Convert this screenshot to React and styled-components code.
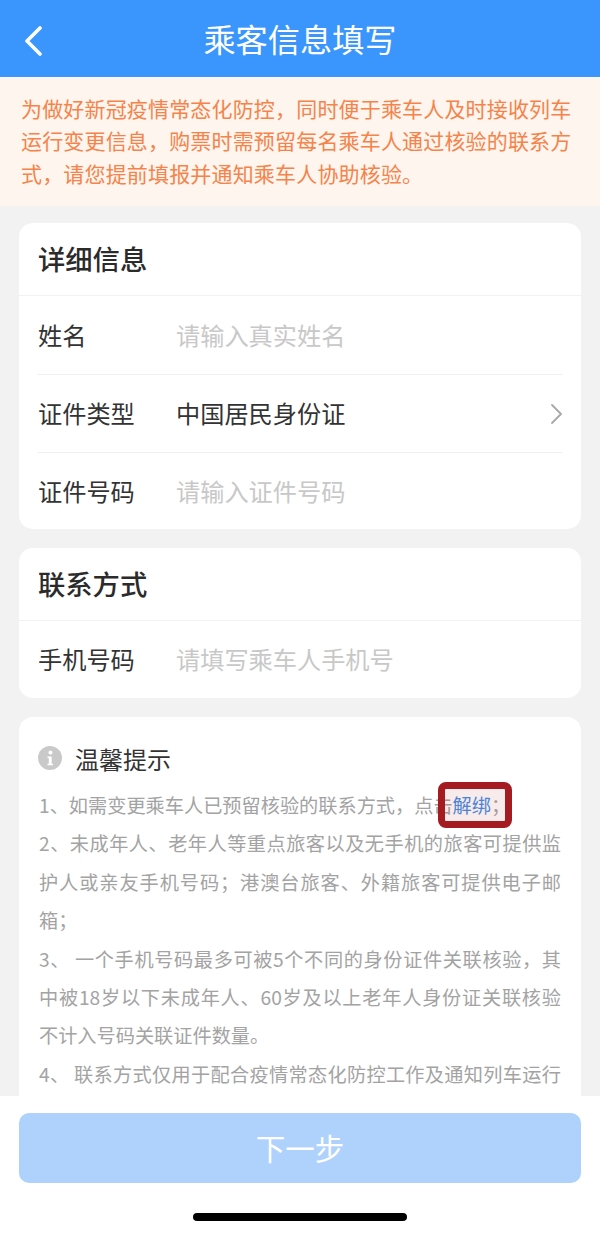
import React from 'react'
import styled, { createGlobalStyle } from 'styled-components'

const GlobalStyle = createGlobalStyle`
  html, body {
    margin: 0;
    padding: 0;
    background: #f2f2f2;
  }
  body {
    font-family: "Noto Sans CJK SC", "Noto Sans", sans-serif;
  }
`

const Page = styled.div`
  width: 600px;
  height: 1234px;
  display: flex;
  flex-direction: column;
  overflow: hidden;
  background: #f2f2f2;
`

const Header = styled.header`
  flex: none;
  height: 77px;
  box-sizing: border-box;
  padding-bottom: 2px;
  position: relative;
  display: flex;
  align-items: center;
  justify-content: center;
  background: #3a96fc;
  color: #fff;
  font-size: 32.2px;
`

const BackButton = styled.svg`
  position: absolute;
  left: 22px;
  top: 25px;
  width: 20px;
  height: 32px;
`

const Notice = styled.p`
  flex: none;
  margin: 0;
  height: 129px;
  box-sizing: border-box;
  padding: 15px 21px 0;
  background: #fef5ee;
  color: #f5834a;
  font-size: 21px;
  line-height: 32.4px;
  letter-spacing: 0.17px;
`

const Content = styled.main`
  flex: 1;
  min-height: 0;
  overflow: hidden;
  padding: 17px 19px 0;
  display: flex;
  flex-direction: column;
  gap: 19px;
`

const Card = styled.section`
  flex: none;
  background: #fff;
  border-radius: 14px;
`

const CardTitle = styled.h2`
  margin: 0;
  height: 73px;
  box-sizing: border-box;
  padding: 0 0 2px 19px;
  display: flex;
  align-items: center;
  font-size: 27.3px;
  font-weight: 500;
  color: #2b2b2b;
  border-bottom: 1px solid #f2f2f2;
`

const Row = styled.div`
  height: ${(p) => p.$h || 78}px;
  margin: 0 19px;
  padding-bottom: 2px;
  display: flex;
  align-items: center;
  font-size: 24.2px;
  border-top: ${(p) => (p.$first ? 'none' : '1px solid #f0f0f0')};
  box-sizing: border-box;
`

const Label = styled.span`
  width: 138px;
  flex: none;
  color: #333;
`

const Value = styled.span`
  flex: 1;
  color: ${(p) => (p.$placeholder ? '#c8c8c8' : '#333')};
`

const Chevron = styled.svg`
  width: 13px;
  height: 22px;
  margin-top: 2px;
  flex: none;
`

const TipCard = styled(Card)`
  padding: 21px 20px 40px;
`

const TipHead = styled.div`
  display: flex;
  align-items: center;
  gap: 13px;
  height: 40px;
  margin-bottom: 8px;
  font-size: 24px;
  color: #333;
`

const InfoIcon = styled.svg`
  width: 24px;
  height: 24px;
  margin-left: -1px;
  flex: none;
`

const TipText = styled.p`
  margin: 0;
  font-size: 19.2px;
  line-height: 38.4px;
  color: #a3a3a3;
  text-align: justify;
  text-align-last: ${(p) => (p.$stretch ? 'justify' : 'auto')};
`

const UnbindLink = styled.span`
  position: relative;
  color: #3f8ce8;
`

// red annotation frame that was painted over the screenshot
const Highlight = styled.span`
  position: absolute;
  left: -15px;
  top: -9px;
  width: 74px;
  height: 46px;
  box-sizing: border-box;
  border: 7px solid #a41c22;
  border-radius: 8px;
  background: rgba(190, 60, 60, 0.1);
`

const Footer = styled.footer`
  flex: none;
  height: 138px;
  box-sizing: border-box;
  padding: 17px 19px 0;
  background: #fff;
  display: flex;
  flex-direction: column;
  align-items: center;
`

const NextButton = styled.button`
  width: 100%;
  height: 70px;
  border: 0;
  padding: 0 0 3px;
  border-radius: 10px;
  background: #afd2fd;
  color: #fff;
  font-family: inherit;
  font-size: 29.5px;
`

const HomeBar = styled.div`
  width: 214px;
  height: 8px;
  margin-top: 30px;
  border-radius: 4px;
  background: #000;
`

const ChevronRight = () => (
  <Chevron viewBox="0 0 13 22" fill="none">
    <path d="M3 2l9 9-9 9" stroke="#a8a8a8" strokeWidth="1.8" strokeLinecap="round" strokeLinejoin="round" />
  </Chevron>
)

const App = () => {
  return (
    <Page>
      <GlobalStyle />
      <Header>
        <BackButton viewBox="0 0 20 32" fill="none">
          <path d="M18 3L5 16l13 13" stroke="#fff" strokeWidth="3.6" strokeLinecap="round" strokeLinejoin="round" />
        </BackButton>
        乘客信息填写
      </Header>
      <Notice>为做好新冠疫情常态化防控，同时便于乘车人及时接收列车运行变更信息，购票时需预留每名乘车人通过核验的联系方式，请您提前填报并通知乘车人协助核验。</Notice>
      <Content>
        <Card>
          <CardTitle>详细信息</CardTitle>
          <Row $first>
            <Label>姓名</Label>
            <Value $placeholder>请输入真实姓名</Value>
          </Row>
          <Row>
            <Label>证件类型</Label>
            <Value>中国居民身份证</Value>
            <ChevronRight />
          </Row>
          <Row $h={77}>
            <Label>证件号码</Label>
            <Value $placeholder>请输入证件号码</Value>
          </Row>
        </Card>
        <Card>
          <CardTitle>联系方式</CardTitle>
          <Row $first $h={77}>
            <Label>手机号码</Label>
            <Value $placeholder>请填写乘车人手机号</Value>
          </Row>
        </Card>
        <TipCard>
          <TipHead>
            <InfoIcon viewBox="0 0 24 24">
              <circle cx="12" cy="12" r="12" fill="#c9c9c9" />
              <circle cx="12.5" cy="6.5" r="2" fill="#fff" />
              <path d="M9.5 10.5h4.2v7.2h1.3v1.6H9.5v-1.6h1.3v-5.6H9.5z" fill="#fff" />
            </InfoIcon>
            温馨提示
          </TipHead>
          <TipText>
            1、如需变更乘车人已预留核验的联系方式，点击<UnbindLink>解绑<Highlight /></UnbindLink>；
          </TipText>
          <TipText>2、未成年人、老年人等重点旅客以及无手机的旅客可提供监护人或亲友手机号码；港澳台旅客、外籍旅客可提供电子邮箱；</TipText>
          <TipText>3、 一个手机号码最多可被5个不同的身份证件关联核验，其中被18岁以下未成年人、60岁及以上老年人身份证关联核验不计入号码关联证件数量。</TipText>
          <TipText $stretch>4、 联系方式仅用于配合疫情常态化防控工作及通知列车运行</TipText>
        </TipCard>
      </Content>
      <Footer>
        <NextButton>下一步</NextButton>
        <HomeBar />
      </Footer>
    </Page>
  )
}

export default App
